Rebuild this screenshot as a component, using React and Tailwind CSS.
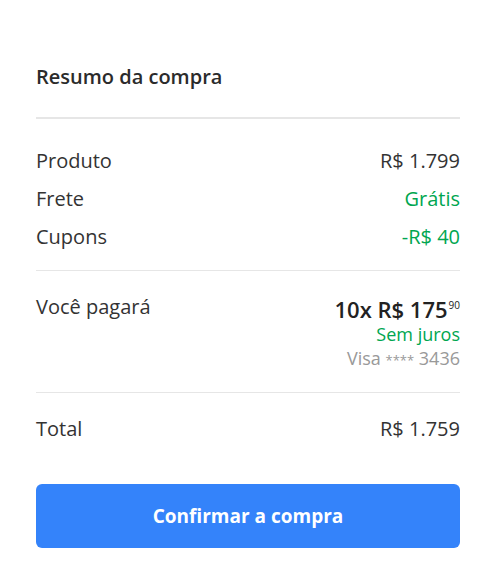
import React from "react";

function Linha({ label, valor, verde }) {
  return (
    <div className="flex justify-between items-center h-6 text-[20px] leading-6">
      <span className="text-[#333]">{label}</span>
      <span className={verde ? "text-[#00a650]" : "text-[#333]"}>{valor}</span>
    </div>
  );
}

function App() {
  return (
    <div
      className="min-h-screen bg-white pl-9 pr-10 pt-[65px]"
      style={{ fontFamily: "'Open Sans', 'Liberation Sans', sans-serif" }}
    >
      {/* Cabeçalho */}
      <h2 className="text-[20px] leading-6 font-semibold text-[#2b2b2b] mb-[28px]">
        Resumo da compra
      </h2>
      <div className="h-[2px] bg-[#e6e6e6]" />

      {/* Itens */}
      <div className="flex flex-col gap-[14px] pt-[30px] pb-[21px]">
        <Linha label="Produto" valor="R$ 1.799" />
        <Linha label="Frete" valor="Grátis" verde />
        <Linha label="Cupons" valor="-R$ 40" verde />
      </div>
      <div className="h-px bg-[#e6e6e6]" />

      {/* Parcelamento */}
      <div className="flex justify-between pt-[24px] pb-[22px]">
        <span className="text-[20px] leading-6 text-[#333]">Você pagará</span>
        <div className="flex flex-col items-end">
          <div className="h-[26px] text-[22px] leading-[26px] font-semibold text-[#222] flex items-start mt-px">
            10x R$ 175<span className="text-[10px] leading-[14px] font-normal ml-px mt-[2px]">90</span>
          </div>
          <span className="h-6 text-[18px] leading-6 text-[#00a650]">Sem juros</span>
          <span className="h-6 text-[18px] leading-6 text-[#999]">
            Visa <span className="text-[13px] leading-none">****</span> 3436
          </span>
        </div>
      </div>
      <div className="h-px bg-[#e6e6e6]" />

      {/* Total */}
      <div className="pt-[24px]">
        <Linha label="Total" valor="R$ 1.759" />
      </div>

      <button className="mt-[43px] w-full h-16 rounded-md bg-[#3483fa] text-white text-[19px] font-bold">
        Confirmar a compra
      </button>
    </div>
  );
}

export default App;
